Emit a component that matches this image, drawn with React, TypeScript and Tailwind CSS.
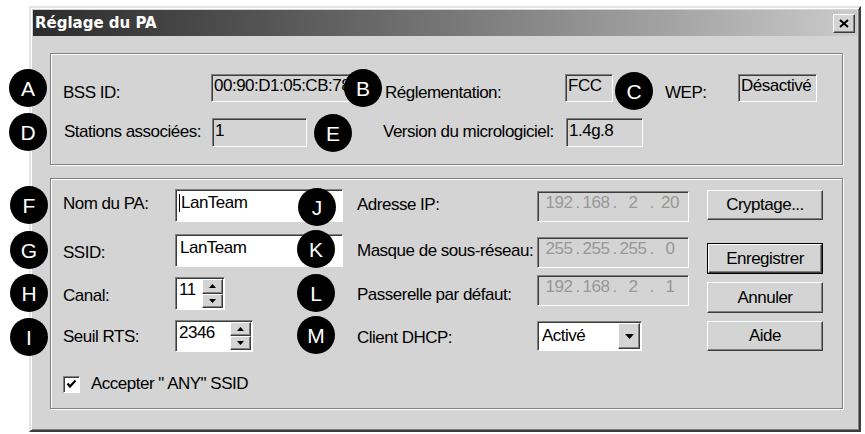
import { Fragment, type ReactNode } from "react";

// petites briques "Windows classique"
const sunken =
  "border border-t-[#808080] border-l-[#808080] border-r-white border-b-white shadow-[inset_1px_1px_0_#3c3c3c]";
const raised =
  "border border-t-white border-l-white border-r-[#3c3c3c] border-b-[#3c3c3c] shadow-[inset_-1px_-1px_0_#808080]";
const etched = "border border-[#808080] shadow-[1px_1px_0_white,inset_1px_1px_0_white]";

function Badge({ letter, className }: { letter: string; className: string }) {
  return (
    <div
      className={`absolute flex h-[38px] w-[38px] items-center justify-center rounded-full bg-black text-[21px] leading-none tracking-normal text-white ${className}`}
    >
      {letter}
    </div>
  );
}

function Label({ children, className = "" }: { children: ReactNode; className?: string }) {
  return <div className={`shrink-0 whitespace-nowrap leading-[20px] ${className}`}>{children}</div>;
}

function Field({
  children,
  className = "",
  white = false,
}: {
  children?: ReactNode;
  className?: string;
  white?: boolean;
}) {
  return (
    <div
      className={`shrink-0 overflow-hidden whitespace-nowrap leading-[20px] ${sunken} ${
        white ? "bg-white" : "bg-[#d4d4d4]"
      } ${className}`}
    >
      {children}
    </div>
  );
}

function IpField({ parts, className = "" }: { parts: string[]; className?: string }) {
  return (
    <Field className={`flex w-[152px] pl-[5px] pt-[1px] text-[#979797] ${className}`}>
      {parts.map((p, i) => (
        <Fragment key={i}>
          {i > 0 && <span className="w-[5px] text-center">.</span>}
          <span className="w-[32px] text-center">{p}</span>
        </Fragment>
      ))}
    </Field>
  );
}

function Arrow({ up = false }: { up?: boolean }) {
  return (
    <svg width="7" height="4" viewBox="0 0 7 4">
      <polygon points={up ? "3.5,0 7,4 0,4" : "0,0 7,0 3.5,4"} fill="black" />
    </svg>
  );
}

function Spin({ value, className = "" }: { value: string; className?: string }) {
  return (
    <Field white className={`flex justify-between p-[1px] pl-[3px] ${className}`}>
      <span className="pt-[1px]">{value}</span>
      <div className="flex w-[21px] flex-col">
        <div className={`flex flex-1 items-center justify-center bg-[#d4d4d4] ${raised}`}>
          <Arrow up />
        </div>
        <div className={`flex flex-1 items-center justify-center bg-[#d4d4d4] ${raised}`}>
          <Arrow />
        </div>
      </div>
    </Field>
  );
}

function Button({ children, className = "" }: { children: ReactNode; className?: string }) {
  return (
    <div
      className={`flex w-[116px] shrink-0 items-center justify-center bg-[#d4d4d4] leading-[20px] ${raised} ${className}`}
    >
      {children}
    </div>
  );
}

export default function App() {
  return (
    <div className="relative h-[434px] w-[865px] overflow-hidden bg-white font-['Liberation_Sans',Arial,sans-serif] text-[17px] tracking-[-0.5px] text-black">
      <div className="ml-[29px] mt-[6px] flex h-[426px] w-[832px] flex-col border-2 border-t-[#e4e4e4] border-l-[#e4e4e4] border-r-[#3c3c3c] border-b-[#3c3c3c] bg-[#d4d4d4] p-[2px] shadow-[inset_1px_1px_0_white,inset_-1px_-1px_0_#808080]">
        {/* barre de titre */}
        <div className="flex h-[26px] shrink-0 items-center justify-between bg-linear-to-r from-[#2c2c2c] to-[#cbcbcb] pl-[2px] pr-[2px]">
          <span className="font-['DejaVu_Sans',sans-serif] text-[15px] font-bold tracking-normal text-white">
            Réglage du PA
          </span>
          <div className={`flex h-[19px] w-[22px] items-center justify-center bg-[#d4d4d4] ${raised}`}>
            <svg width="10" height="9" viewBox="0 0 10 9">
              <path d="M1 1 L9 8 M9 1 L1 8" stroke="black" strokeWidth="2" />
            </svg>
          </div>
        </div>

        {/* infos */}
        <div className={`ml-[17px] mr-[14px] mt-[17px] h-[112px] shrink-0 pt-[20px] ${etched}`}>
          <div className="flex h-[28px] items-start pl-[12px]">
            <Label className="mt-[9px] w-[148px]">BSS ID:</Label>
            <Field className="h-[28px] w-[144px] pl-[2px] pt-[1px]">00:90:D1:05:CB:78</Field>
            <Label className="ml-[30px] mt-[9px] w-[180px]">Réglementation:</Label>
            <Field className="h-[28px] w-[48px] pl-[2px] pt-[1px]">FCC</Field>
            <Label className="ml-[52px] mt-[9px] w-[73px]">WEP:</Label>
            <Field className="h-[28px] w-[79px] pl-[2px] pt-[1px]">Désactivé</Field>
          </div>
          <div className="mt-[16px] flex h-[29px] items-start pl-[13px]">
            <Label className="mt-[4px] w-[148px]">Stations associées:</Label>
            <Field className="h-[29px] w-[95px] pl-[2px] pt-[2px]">1</Field>
            <Label className="ml-[76px] mt-[4px] w-[183px]">Version du micrologiciel:</Label>
            <Field className="h-[29px] w-[77px] pl-[2px] pt-[2px]">1.4g.8</Field>
          </div>
        </div>

        {/* réglages */}
        <div className={`ml-[17px] mr-[14px] mt-[13px] h-[231px] shrink-0 pt-[10px] ${etched}`}>
          <div className="flex h-[45px] items-start pl-[12px]">
            <Label className="mt-[5px] w-[112px]">Nom du PA:</Label>
            <div className="w-[182px] shrink-0">
              <Field white className="flex h-[33px] w-[168px] items-start pl-[3px] pt-[3px]">
                <span className="mr-[1px] mt-[1px] h-[18px] w-[1px] bg-black" />
                LanTeam
              </Field>
            </div>
            <Label className="mt-[6px] w-[180px]">Adresse IP:</Label>
            <div className="w-[170px] shrink-0">
              <IpField parts={["192", "168", "2", "20"]} className="mt-[2px] h-[31px]" />
            </div>
            <Button className="mt-[1px] h-[30px]">Cryptage...</Button>
          </div>

          <div className="flex h-[41px] items-start pl-[12px]">
            <Label className="mt-[9px] w-[112px]">SSID:</Label>
            <div className="w-[182px] shrink-0">
              <Field white className="h-[33px] w-[168px] pl-[4px] pt-[3px]">
                LanTeam
              </Field>
            </div>
            <Label className="mt-[7px] w-[180px]">Masque de sous-réseau:</Label>
            <div className="w-[170px] shrink-0">
              <IpField parts={["255", "255", "255", "0"]} className="mt-[3px] h-[31px]" />
            </div>
            <div className="mt-[9px] h-[31px] w-[116px] shrink-0 border border-black">
              <Button className="h-full w-full">Enregistrer</Button>
            </div>
          </div>

          <div className="flex h-[45px] items-start pl-[12px]">
            <Label className="mt-[11px] w-[112px]">Canal:</Label>
            <div className="w-[182px] shrink-0">
              <Spin value="11" className="mt-[2px] h-[33px] w-[50px]" />
            </div>
            <Label className="mt-[10px] w-[180px]">Passerelle par défaut:</Label>
            <div className="w-[170px] shrink-0">
              <IpField parts={["192", "168", "2", "1"]} className="h-[31px]" />
            </div>
            <Button className="mt-[7px] h-[31px]">Annuler</Button>
          </div>

          <div className="flex h-[55px] items-start pl-[12px]">
            <Label className="mt-[7px] w-[112px]">Seuil RTS:</Label>
            <div className="w-[182px] shrink-0">
              <Spin value="2346" className="h-[32px] w-[78px]" />
            </div>
            <Label className="mt-[8px] w-[180px]">Client DHCP:</Label>
            <div className="w-[170px] shrink-0">
              <Field white className="mt-[1px] flex h-[30px] w-[105px] items-stretch justify-between p-[1px] pl-[4px]">
                <span className="self-center">Activé</span>
                <div className={`flex w-[22px] items-center justify-center bg-[#d4d4d4] ${raised}`}>
                  <svg width="9" height="5" viewBox="0 0 9 5">
                    <polygon points="0,0 9,0 4.5,5" fill="black" />
                  </svg>
                </div>
              </Field>
            </div>
            <Button className="mt-[1px] h-[30px]">Aide</Button>
          </div>

          <div className="flex h-[18px] items-center pl-[12px]">
            <div className={`flex h-[17px] w-[17px] items-center justify-center bg-white ${sunken}`}>
              <svg width="11" height="10" viewBox="0 0 11 10">
                <polyline points="1.5,4.5 4,7.5 9.5,1.5" fill="none" stroke="black" strokeWidth="2.2" />
              </svg>
            </div>
            <span className="ml-[11px] whitespace-nowrap">Accepter " ANY" SSID</span>
          </div>
        </div>
      </div>

      {/* repères */}
      <Badge letter="A" className="left-[9px] top-[69px]" />
      <Badge letter="B" className="left-[344px] top-[69px]" />
      <Badge letter="C" className="left-[615px] top-[72px]" />
      <Badge letter="D" className="left-[9px] top-[113px]" />
      <Badge letter="E" className="left-[314px] top-[114px]" />
      <Badge letter="F" className="left-[10px] top-[186px]" />
      <Badge letter="G" className="left-[10px] top-[231px]" />
      <Badge letter="H" className="left-[10px] top-[274px]" />
      <Badge letter="I" className="left-[10px] top-[318px]" />
      <Badge letter="J" className="left-[298px] top-[188px]" />
      <Badge letter="K" className="left-[297px] top-[230px]" />
      <Badge letter="L" className="left-[297px] top-[274px]" />
      <Badge letter="M" className="left-[297px] top-[316px]" />
    </div>
  );
}
